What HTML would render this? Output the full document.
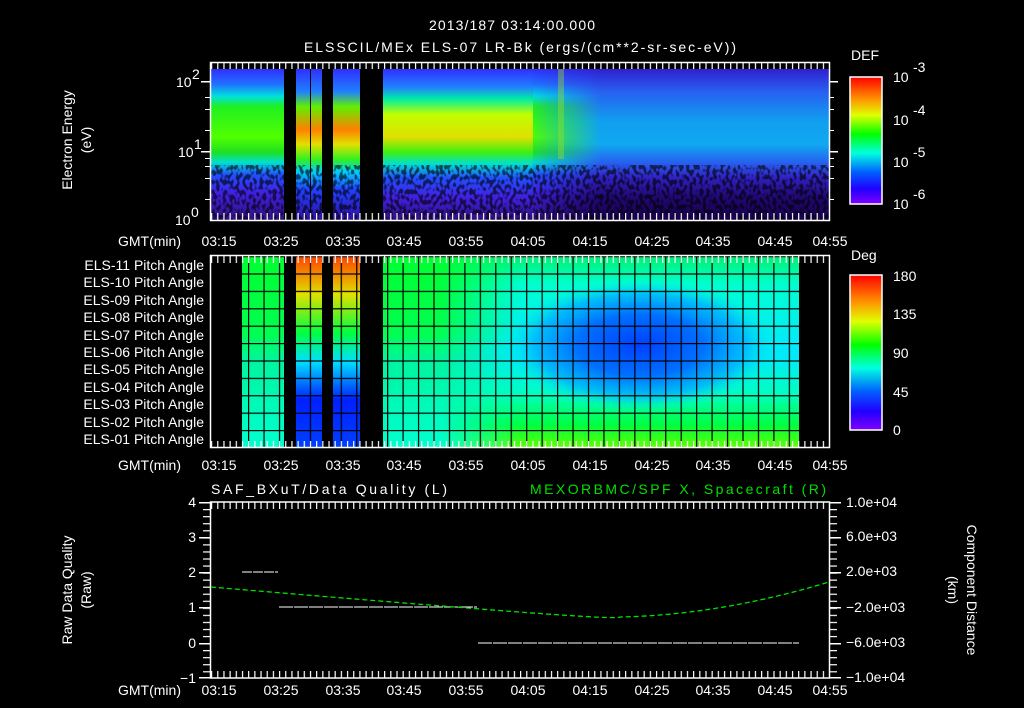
<!DOCTYPE html>
<html><head><meta charset="utf-8"><style>
html,body{margin:0;padding:0;background:#000;width:1024px;height:708px;overflow:hidden}
svg{display:block}
text{font-family:"Liberation Sans",sans-serif;fill:#fff;font-size:14px}
</style></head><body>
<svg width="1024" height="708" viewBox="0 0 1024 708" xmlns="http://www.w3.org/2000/svg">
<defs>
 <linearGradient id="spec" x1="0" y1="0" x2="0" y2="1">
  <stop offset="0" stop-color="#3030ff"/>
  <stop offset="0.1" stop-color="#2070ff"/>
  <stop offset="0.18" stop-color="#00e0e0"/>
  <stop offset="0.25" stop-color="#20f020"/>
  <stop offset="0.45" stop-color="#50ff00"/>
  <stop offset="0.55" stop-color="#20e020"/>
  <stop offset="0.62" stop-color="#00e0d0"/>
  <stop offset="0.7" stop-color="#2050ff"/>
  <stop offset="0.82" stop-color="#4020e0"/>
  <stop offset="1" stop-color="#301080"/>
 </linearGradient>
 <linearGradient id="spec2" x1="0" y1="0" x2="0" y2="1">
  <stop offset="0" stop-color="#3030ff"/>
  <stop offset="0.12" stop-color="#2080ff"/>
  <stop offset="0.2" stop-color="#00f0a0"/>
  <stop offset="0.3" stop-color="#c0ff00"/>
  <stop offset="0.45" stop-color="#e0e000"/>
  <stop offset="0.55" stop-color="#40f010"/>
  <stop offset="0.63" stop-color="#00e0d0"/>
  <stop offset="0.72" stop-color="#2050ff"/>
  <stop offset="0.85" stop-color="#4020e0"/>
  <stop offset="1" stop-color="#301080"/>
 </linearGradient>
 <linearGradient id="spec3" x1="0" y1="0" x2="0" y2="1">
  <stop offset="0" stop-color="#3030ff"/>
  <stop offset="0.15" stop-color="#2080ff"/>
  <stop offset="0.25" stop-color="#60f000"/>
  <stop offset="0.4" stop-color="#ff8000"/>
  <stop offset="0.5" stop-color="#e0e000"/>
  <stop offset="0.6" stop-color="#30f020"/>
  <stop offset="0.68" stop-color="#00d0ff"/>
  <stop offset="0.8" stop-color="#2040ff"/>
  <stop offset="1" stop-color="#3010a0"/>
 </linearGradient>
 <linearGradient id="spec4" gradientUnits="userSpaceOnUse" x1="0" y1="69" x2="0" y2="220">
  <stop offset="0" stop-color="#3020d0"/>
  <stop offset="0.15" stop-color="#2860f0"/>
  <stop offset="0.35" stop-color="#10a0f0"/>
  <stop offset="0.5" stop-color="#10a8f0"/>
  <stop offset="0.62" stop-color="#2860f0"/>
  <stop offset="0.72" stop-color="#3020c0"/>
  <stop offset="0.85" stop-color="#200870"/>
  <stop offset="1" stop-color="#180050"/>
 </linearGradient>
 <linearGradient id="fadeA" gradientUnits="userSpaceOnUse" x1="530" y1="0" x2="600" y2="0">
  <stop offset="0" stop-color="#fff" stop-opacity="0"/>
  <stop offset="1" stop-color="#fff" stop-opacity="1"/>
 </linearGradient>
 <linearGradient id="fadeB" gradientUnits="userSpaceOnUse" x1="440" y1="0" x2="520" y2="0">
  <stop offset="0" stop-color="#fff" stop-opacity="0"/>
  <stop offset="1" stop-color="#fff" stop-opacity="1"/>
 </linearGradient>
 <mask id="mR" maskUnits="userSpaceOnUse" x="0" y="0" width="1024" height="708"><rect x="500" y="60" width="340" height="170" fill="url(#fadeA)"/></mask>
 <mask id="mP" maskUnits="userSpaceOnUse" x="0" y="0" width="1024" height="708"><rect x="430" y="250" width="380" height="200" fill="url(#fadeB)"/></mask>
 <linearGradient id="cbar" x1="0" y1="0" x2="0" y2="1">
  <stop offset="0" stop-color="#ff0000"/>
  <stop offset="0.17" stop-color="#ff9000"/>
  <stop offset="0.3" stop-color="#e0ff00"/>
  <stop offset="0.45" stop-color="#00ff00"/>
  <stop offset="0.6" stop-color="#00ffe0"/>
  <stop offset="0.75" stop-color="#0060ff"/>
  <stop offset="0.88" stop-color="#2000ff"/>
  <stop offset="1" stop-color="#8000ff"/>
 </linearGradient>
 <linearGradient id="pa" x1="0" y1="0" x2="0" y2="1">
  <stop offset="0" stop-color="#00ff30"/>
  <stop offset="0.4" stop-color="#00ff50"/>
  <stop offset="0.55" stop-color="#00f5a0"/>
  <stop offset="1" stop-color="#00ffd0"/>
 </linearGradient>
 <linearGradient id="pa2" x1="0" y1="0" x2="0" y2="1">
  <stop offset="0" stop-color="#00f070"/>
  <stop offset="0.15" stop-color="#00ffd0"/>
  <stop offset="0.5" stop-color="#00e8ff"/>
  <stop offset="0.72" stop-color="#00ffc0"/>
  <stop offset="0.88" stop-color="#00ff40"/>
  <stop offset="1" stop-color="#60ff00"/>
 </linearGradient>
 <radialGradient id="blob" cx="0.5" cy="0.5" r="0.5">
  <stop offset="0" stop-color="#0040ff"/>
  <stop offset="0.45" stop-color="#0070ff"/>
  <stop offset="0.75" stop-color="#00b0ff" stop-opacity="0.8"/>
  <stop offset="1" stop-color="#00ffe0" stop-opacity="0"/>
 </radialGradient>
 <linearGradient id="gap" x1="0" y1="0" x2="0" y2="1">
  <stop offset="0" stop-color="#ff4000"/>
  <stop offset="0.2" stop-color="#e0e000"/>
  <stop offset="0.4" stop-color="#00ff40"/>
  <stop offset="0.55" stop-color="#00e0ff"/>
  <stop offset="0.75" stop-color="#0020ff"/>
  <stop offset="1" stop-color="#0040ff"/>
 </linearGradient>
 <pattern id="grid" x="248" y="256" width="15.45" height="17.4" patternUnits="userSpaceOnUse">
  <rect x="0" y="0" width="1.2" height="17.4" fill="#000"/>
  <rect x="0" y="0" width="15.45" height="1.2" fill="#000"/>
 </pattern>
 <pattern id="tkT" x="211" y="0" width="6.18" height="10" patternUnits="userSpaceOnUse">
  <rect x="0" y="0" width="1.2" height="10" fill="#fff"/>
 </pattern>
 <pattern id="tkY" x="0" y="502" width="10" height="7.05" patternUnits="userSpaceOnUse">
  <rect x="0" y="0" width="10" height="1.2" fill="#fff"/>
 </pattern>
 <filter id="spk" x="0" y="0" width="1" height="1">
  <feTurbulence type="fractalNoise" baseFrequency="0.3 0.2" numOctaves="1" seed="3"/>
  <feColorMatrix type="matrix" values="0 0 0 0 0  0 0 0 0 0  0 0 0 0 0  0 0 0 -8 4.3"/>
 </filter>
</defs>

<text x="512" y="30" text-anchor="middle" font-size="16" textLength="166">2013/187 03:14:00.000</text>
<text x="520" y="52" text-anchor="middle" font-size="16" textLength="432">ELSSCIL/MEx ELS-07 LR-Bk  (ergs/(cm**2-sr-sec-eV))</text>

<!-- PANEL 1 -->
<rect x="211" y="69" width="618" height="151" fill="url(#spec)"/>
<rect x="383" y="69" width="150" height="151" fill="url(#spec2)"/>
<rect x="296" y="69" width="65" height="151" fill="url(#spec3)"/>
<rect x="530" y="69" width="299" height="151" fill="url(#spec4)" mask="url(#mR)"/>
<rect x="558" y="69" width="6" height="90" fill="#a0e020" opacity="0.4"/>
<rect x="211" y="165" width="618" height="55" filter="url(#spk)" opacity="0.6"/>
<rect x="284" y="69" width="12" height="151" fill="#000"/>
<rect x="322" y="69" width="11" height="151" fill="#000"/>
<rect x="310" y="69" width="1" height="151" fill="#000"/>
<rect x="360" y="69" width="23" height="151" fill="#000"/>
<rect x="210.5" y="62.5" width="619" height="158" fill="none" stroke="#fff" stroke-width="1.5"/>
<rect x="211" y="63" width="618" height="6" fill="url(#tkT)"/>
<rect x="211" y="213" width="618" height="7" fill="url(#tkT)"/>
<g fill="#fff">
 <rect x="201" y="81" width="9" height="1.5"/><rect x="201" y="151" width="9" height="1.5"/>
 <rect x="205" y="97" width="5" height="1"/><rect x="205" y="109" width="5" height="1"/><rect x="205" y="130" width="5" height="1"/>
 <rect x="205" y="158" width="5" height="1"/><rect x="205" y="166" width="5" height="1"/><rect x="205" y="178" width="5" height="1"/><rect x="205" y="199" width="5" height="1"/>
 <rect x="829" y="81" width="9" height="1.5"/><rect x="829" y="151" width="9" height="1.5"/>
 <rect x="829" y="97" width="5" height="1"/><rect x="829" y="109" width="5" height="1"/><rect x="829" y="130" width="5" height="1"/>
 <rect x="829" y="158" width="5" height="1"/><rect x="829" y="166" width="5" height="1"/><rect x="829" y="178" width="5" height="1"/><rect x="829" y="199" width="5" height="1"/>
</g>
<text x="176" y="87" font-size="13">10</text><text x="192" y="79" font-size="9">2</text>
<text x="178" y="157" font-size="13">10</text><text x="194" y="149" font-size="9">1</text>
<text x="175" y="225" font-size="13">10</text><text x="191" y="217" font-size="9">0</text>
<text transform="translate(72,140) rotate(-90)" text-anchor="middle" font-size="15">Electron Energy</text>
<text transform="translate(91,140) rotate(-90)" text-anchor="middle" font-size="15">(eV)</text>
<text x="851" y="60" font-size="16">DEF</text>
<rect x="850" y="77" width="32" height="127" fill="url(#cbar)" stroke="#fff" stroke-width="1.5"/>
<text x="893" y="82" font-size="16">10</text><text x="913" y="72" font-size="12">-3</text>
<text x="893" y="125" font-size="16">10</text><text x="913" y="115" font-size="12">-4</text>
<text x="893" y="167" font-size="16">10</text><text x="913" y="157" font-size="12">-5</text>
<text x="893" y="209" font-size="16">10</text><text x="913" y="199" font-size="12">-6</text>

<g font-size="14">
<text x="118" y="246">GMT(min)</text>
<text x="118" y="470">GMT(min)</text>
<text x="118" y="695">GMT(min)</text>
</g>
<g text-anchor="middle" font-size="14">
<text x="219" y="246">03:15</text><text x="281" y="246">03:25</text><text x="343" y="246">03:35</text><text x="404" y="246">03:45</text><text x="466" y="246">03:55</text><text x="528" y="246">04:05</text><text x="590" y="246">04:15</text><text x="652" y="246">04:25</text><text x="713" y="246">04:35</text><text x="775" y="246">04:45</text><text x="830" y="246">04:55</text>
<text x="219" y="470">03:15</text><text x="281" y="470">03:25</text><text x="343" y="470">03:35</text><text x="404" y="470">03:45</text><text x="466" y="470">03:55</text><text x="528" y="470">04:05</text><text x="590" y="470">04:15</text><text x="652" y="470">04:25</text><text x="713" y="470">04:35</text><text x="775" y="470">04:45</text><text x="830" y="470">04:55</text>
<text x="219" y="695">03:15</text><text x="281" y="695">03:25</text><text x="343" y="695">03:35</text><text x="404" y="695">03:45</text><text x="466" y="695">03:55</text><text x="528" y="695">04:05</text><text x="590" y="695">04:15</text><text x="652" y="695">04:25</text><text x="713" y="695">04:35</text><text x="775" y="695">04:45</text><text x="830" y="695">04:55</text>
</g>

<!-- PANEL 2 -->
<rect x="242" y="256" width="557" height="192" fill="url(#pa)"/>
<rect x="440" y="256" width="359" height="192" fill="url(#pa2)" mask="url(#mP)"/>
<ellipse cx="640" cy="345" rx="140" ry="68" fill="url(#blob)"/>
<rect x="296" y="256" width="26" height="192" fill="url(#gap)"/>
<rect x="333" y="256" width="27" height="192" fill="url(#gap)"/>
<rect x="242" y="256" width="557" height="192" fill="url(#grid)"/>
<rect x="284" y="256" width="12" height="192" fill="#000"/>
<rect x="322" y="256" width="11" height="192" fill="#000"/>
<rect x="360" y="256" width="23" height="192" fill="#000"/>
<rect x="210.5" y="255.5" width="619" height="192" fill="none" stroke="#fff" stroke-width="1.5"/>
<rect x="211" y="256" width="618" height="7" fill="url(#tkT)"/>
<rect x="211" y="441" width="618" height="7" fill="url(#tkT)"/>
<g text-anchor="end" font-size="13">
<text x="204" y="270">ELS-11 Pitch Angle</text>
<text x="204" y="287">ELS-10 Pitch Angle</text>
<text x="204" y="305">ELS-09 Pitch Angle</text>
<text x="204" y="322">ELS-08 Pitch Angle</text>
<text x="204" y="340">ELS-07 Pitch Angle</text>
<text x="204" y="357">ELS-06 Pitch Angle</text>
<text x="204" y="374">ELS-05 Pitch Angle</text>
<text x="204" y="392">ELS-04 Pitch Angle</text>
<text x="204" y="409">ELS-03 Pitch Angle</text>
<text x="204" y="427">ELS-02 Pitch Angle</text>
<text x="204" y="444">ELS-01 Pitch Angle</text>
</g>
<text x="851" y="260" font-size="16">Deg</text>
<rect x="850" y="275" width="32" height="155" fill="url(#cbar)" stroke="#fff" stroke-width="1.5"/>
<g font-size="16">
<text x="893" y="281">180</text><text x="893" y="319">135</text><text x="893" y="358">90</text><text x="893" y="397">45</text><text x="893" y="435">0</text>
</g>

<!-- PANEL 3 -->
<text x="211" y="494" font-size="15" textLength="236">SAF_BXuT/Data Quality (L)</text>
<text x="530" y="494" font-size="15" style="fill:#00e000" textLength="296">MEXORBMC/SPF X, Spacecraft (R)</text>
<rect x="210.5" y="502" width="619" height="176" fill="none" stroke="#fff" stroke-width="1.5"/>
<rect x="211" y="502" width="618" height="7" fill="url(#tkT)"/>
<rect x="211" y="671" width="618" height="7" fill="url(#tkT)"/>
<rect x="203" y="502" width="7" height="176" fill="url(#tkY)"/>
<rect x="830" y="502" width="7" height="176" fill="url(#tkY)"/>
<g fill="#fff">
<rect x="199" y="502" width="11" height="1.5"/><rect x="199" y="537" width="11" height="1.5"/><rect x="199" y="572" width="11" height="1.5"/><rect x="199" y="607" width="11" height="1.5"/><rect x="199" y="643" width="11" height="1.5"/><rect x="199" y="677" width="11" height="1.5"/>
<rect x="830" y="502" width="11" height="1.5"/><rect x="830" y="537" width="11" height="1.5"/><rect x="830" y="572" width="11" height="1.5"/><rect x="830" y="607" width="11" height="1.5"/><rect x="830" y="643" width="11" height="1.5"/><rect x="830" y="677" width="11" height="1.5"/>
</g>
<g font-size="14" text-anchor="end">
<text x="196" y="507">4</text><text x="196" y="542">3</text><text x="196" y="577">2</text><text x="196" y="612">1</text><text x="196" y="648">0</text><text x="196" y="683">−1</text>
</g>
<g font-size="13">
<text x="846" y="507">1.0e+04</text><text x="846" y="541">6.0e+03</text><text x="846" y="576">2.0e+03</text><text x="846" y="612">−2.0e+03</text><text x="846" y="647">−6.0e+03</text><text x="846" y="682">−1.0e+04</text>
</g>
<text transform="translate(72,590) rotate(-90)" text-anchor="middle" font-size="15">Raw Data Quality</text>
<text transform="translate(91,590) rotate(-90)" text-anchor="middle" font-size="15">(Raw)</text>
<text transform="translate(967,590) rotate(90)" text-anchor="middle" font-size="15">Component Distance</text>
<text transform="translate(948,590) rotate(90)" text-anchor="middle" font-size="15">(km)</text>
<line x1="242" y1="572" x2="278" y2="572" stroke="#fff" stroke-width="1" stroke-dasharray="10,1"/>
<line x1="279" y1="607" x2="477" y2="607" stroke="#fff" stroke-width="1" stroke-dasharray="14,1"/>
<line x1="478" y1="643" x2="799" y2="643" stroke="#fff" stroke-width="1" stroke-dasharray="14,1"/>
<path d="M211,587 Q340,598 480,609 T620,617 Q720,615 829,582" fill="none" stroke="#00e000" stroke-width="1.3" stroke-dasharray="5,3"/>
</svg>
</body></html>
